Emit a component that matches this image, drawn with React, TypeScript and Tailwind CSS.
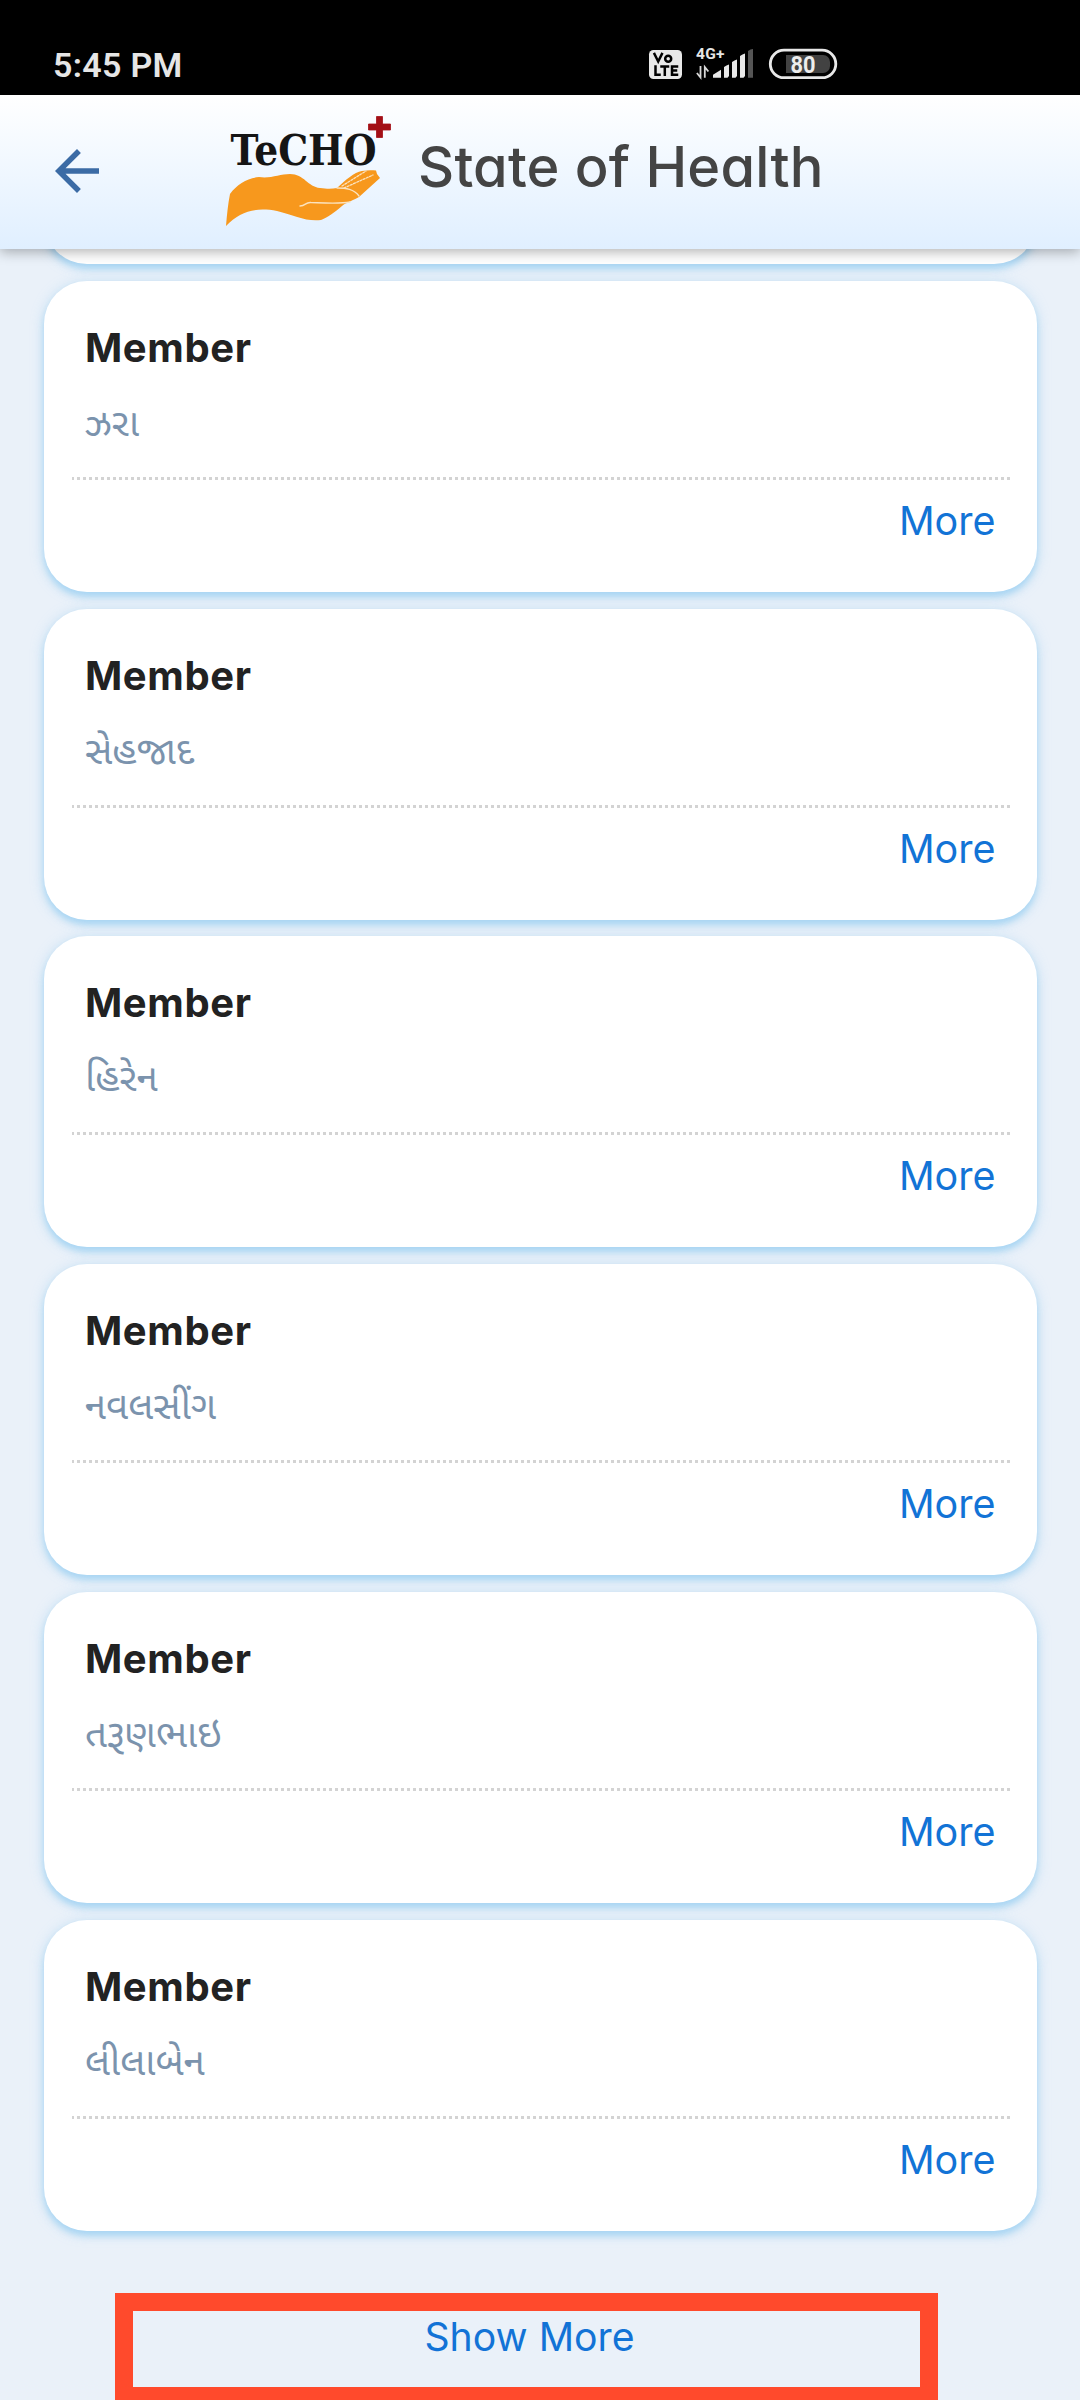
import React from "react";

const members = ["ઝરા", "સેહજાદ", "હિરેન", "નવલસીંગ", "તરૂણભાઇ", "લીલાબેન"];

const sans = "font-['Inter',sans-serif] [font-feature-settings:'cv11'_1]";

const cardSurface =
  "shrink-0 rounded-[43px] bg-white shadow-[0_5px_6px_rgba(137,200,240,0.55),0_2px_14px_rgba(137,200,240,0.4)]";

function StatusBar() {
  return (
    <div className="relative z-20 flex h-[95px] shrink-0 items-start bg-black pt-[44px] pl-[53px] font-['Roboto',sans-serif] text-[#e6e6e6]">
      <span className="w-[128px] text-[34px] leading-[42px] font-semibold tracking-[0.3px] whitespace-nowrap">5:45 PM</span>
      <svg className="mt-[-4px] ml-[467px] h-[50px] w-[192px] shrink-0" viewBox="648 40 192 50">
        <rect x="649" y="50" width="33" height="29" rx="4.5" fill="#e8e8e8" />
        <g fill="none" stroke="#000" strokeWidth="2.5" strokeLinecap="square">
          <path d="M654.5 54l3.700 7.500 3.700-7.500" />
          <circle cx="668.2" cy="58.800" r="3" />
          <path d="M655.500 66.500v8.300h4M661.500 66.500h6.500M664.800 66.500v8.300M677 66.500h-5v8.300h5M672 70.600h4" />
        </g>
        <text x="696" y="58.800" fontSize="15.500" fontWeight="700" textLength="28.500" fill="#e6e6e6">4G+</text>
        <g fill="none" stroke="#d8d8d8" strokeWidth="1.800">
          <path d="M700.500 66v11.500l-3.600-4.500M704.800 77.800V67l3.600 4.500" />
        </g>
        <path
          d="M713 77.800v-3l8-5v8z M724 67q2.500-2 5-2.500v11.500l-1.500 1.800H724z M732 62q2.500-2 5-2.500v16.500l-1.500 1.800H732z M740 56q2.500-2 5-2.500v22.500l-1.500 1.800H740z"
          fill="#e8e8e8"
        />
        <path d="M748 77.800V51q2.500-2 5-2v28.800z" fill="#555" />
        <rect x="770.300" y="50.200" width="65.500" height="27.500" rx="13.700" fill="none" stroke="#e8e8e8" strokeWidth="2.800" />
        <path d="M786 55h37a7 7 0 0 1 7 7v4a7 7 0 0 1-7 7h-37z" fill="#424242" />
        <text x="790.500" y="72.500" fontSize="23.500" fontWeight="700" textLength="25" lengthAdjust="spacingAndGlyphs" fill="#ededed">80</text>
      </svg>
    </div>
  );
}

function Logo() {
  return (
    <svg className="h-[114px] w-[170px] shrink-0" viewBox="223 114 170 114">
      <text
        x="230.500"
        y="166"
        fontFamily="'DejaVu Serif',serif"
        fontWeight="700"
        fontSize="43.500"
        textLength="146"
        lengthAdjust="spacingAndGlyphs"
        fill="#151515"
      >
        TeCHO
      </text>
      <path d="M376.500 117.500h6v7.500h8v6h-8v7.500h-6v-7.500h-8v-6h8z" fill="#a30f16" stroke="#a30f16" strokeWidth="0.800" />
      <path
        d="M226 227C227 215 228 205 230 195C237 185 248 179 259 178C270 180 280 175 290 175C304 175 308 188 320 189C327 190 332 190 337 189C346 181 354 173 362 172C367 171 372 171 376 171.500L377 175L380 179L359 198C350 203 345 204 342 207C335 213 327 219 321 221C306 223 294 216 277 212C256 208 240 212 226 227Z"
        fill="#f7981d"
      />
      <g fill="none" stroke="#fbe3bf" strokeLinecap="round">
        <path d="M300 207C306 207 305 203 311 203.500C325 204 340 205 350 203" strokeWidth="1.400" />
        <path d="M337 189C346 189 354 190 359 197" strokeWidth="1.300" />
        <path d="M344 189L373 176M342 187L366 172" strokeWidth="1.300" strokeDasharray="2 1.500" />
      </g>
    </svg>
  );
}

function Header() {
  return (
    <header className="relative z-10 flex h-[154px] shrink-0 bg-linear-to-b from-white to-[#e0efff] shadow-[0_3px_12px_rgba(0,0,0,0.3)]">
      <svg className="mt-[43px] ml-[44px] h-[66px] w-[66px] shrink-0" viewBox="0 0 24 24" fill="#3b6ba5">
        <path d="M20 11H7.830l5.590-5.590L12 4l-8 8 8 8 1.410-1.410L7.830 13H20v-2z" />
      </svg>
      <div className="mt-[18px] ml-[113px] flex">
        <Logo />
      </div>
      <h1 className={`${sans} mt-[40px] ml-[25px] text-[56px] leading-[64px] font-medium tracking-[0.200px] whitespace-nowrap text-[#444]`}>
        State of Health
      </h1>
    </header>
  );
}

function Card({ name }: { name: string }) {
  return (
    <article className={`${cardSurface} flex h-[311px] flex-col px-[28px]`}>
      <div className="h-[196px] pt-[43px] pl-[13px]">
        <h2 className={`${sans} text-[40px] leading-[48px] font-bold tracking-[0.600px] whitespace-nowrap text-[#222]`}>Member</h2>
        <p className="mt-[25px] text-[38.500px] leading-[48px] whitespace-nowrap text-[#7b93ad] font-['Noto_Sans','Noto_Sans_Gujarati',sans-serif]">
          {name}
        </p>
      </div>
      <div className="h-[3px] w-[938px] bg-[repeating-linear-gradient(90deg,#d3d3d3_0_3px,transparent_3px_6px)] bg-[position:-1px_0]" />
      <a className={`${sans} mt-[17px] mr-[13.500px] self-end text-[39.500px] leading-[48px] whitespace-nowrap text-[#1273d6]`}>More</a>
    </article>
  );
}

export default function App() {
  return (
    <div className="flex h-[2400px] w-[1080px] flex-col overflow-hidden bg-[#eaf1f9]">
      <StatusBar />
      <Header />
      <main className="mt-[-75px] flex shrink-0 flex-col gap-[16.800px] pr-[43px] pl-[44px]">
        {/* Tail of the card that has scrolled under the header */}
        <div className={`${cardSurface} h-[90px]`} />
        {members.map((name) => (
          <Card key={name} name={name} />
        ))}
      </main>
      <div className="mt-[62px] ml-[115px] flex h-[112.500px] w-[823px] shrink-0 justify-center border-[18px] border-[#ff4a2c] pt-[2px] pl-[6px]">
        <a className={`${sans} text-[39.200px] leading-[48px] whitespace-nowrap text-[#1273d6]`}>Show More</a>
      </div>
    </div>
  );
}
